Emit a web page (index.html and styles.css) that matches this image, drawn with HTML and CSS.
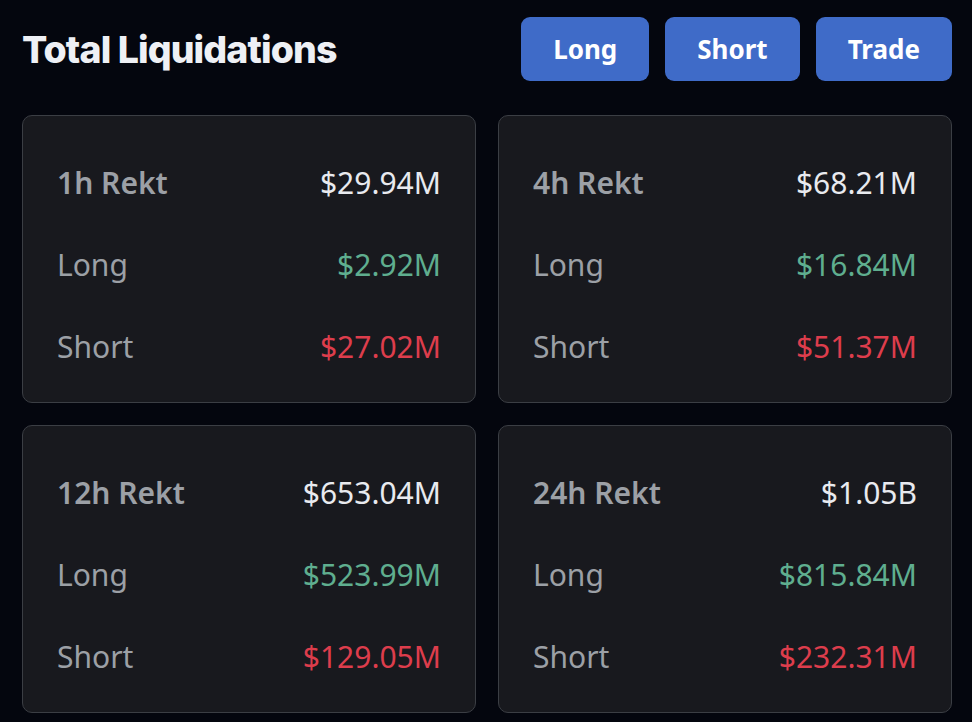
FILE: index.html
```html
<!DOCTYPE html>
<html>
<head>
    <title>Total Liquidations</title>
    <link rel="stylesheet" href="styles.css">
</head>
<body>
    <div class="header">
        <h1>Total Liquidations</h1>
        <div class="actions">
            <button class="btn">Long</button>
            <button class="btn">Short</button>
            <button class="btn">Trade</button>
        </div>
    </div>

    <div class="grid">
        <div class="card">
            <div class="row"><span class="label strong">1h Rekt</span><span class="value">$29.94M</span></div>
            <div class="row"><span class="label">Long</span><span class="value long">$2.92M</span></div>
            <div class="row"><span class="label">Short</span><span class="value short">$27.02M</span></div>
        </div>
        <div class="card">
            <div class="row"><span class="label strong">4h Rekt</span><span class="value">$68.21M</span></div>
            <div class="row"><span class="label">Long</span><span class="value long">$16.84M</span></div>
            <div class="row"><span class="label">Short</span><span class="value short">$51.37M</span></div>
        </div>
        <div class="card">
            <div class="row"><span class="label strong">12h Rekt</span><span class="value">$653.04M</span></div>
            <div class="row"><span class="label">Long</span><span class="value long">$523.99M</span></div>
            <div class="row"><span class="label">Short</span><span class="value short">$129.05M</span></div>
        </div>
        <div class="card">
            <div class="row"><span class="label strong">24h Rekt</span><span class="value">$1.05B</span></div>
            <div class="row"><span class="label">Long</span><span class="value long">$815.84M</span></div>
            <div class="row"><span class="label">Short</span><span class="value short">$232.31M</span></div>
        </div>
    </div>
</body>
</html>
```

FILE: styles.css
```css
body {
    margin: 0;
    padding: 17px 20px 0 22px;
    background: #04060e;
    color: #e8eaef;
    font-family: "Noto Sans", sans-serif;
}

.header {
    display: flex;
    justify-content: space-between;
    align-items: center;
    height: 64px;
}

.header h1 {
    margin: 0;
    font-family: Inter, sans-serif;
    font-size: 37.5px;
    font-weight: 800;
    letter-spacing: -0.9px;
    color: #eef0f5;
}

.actions {
    display: flex;
    gap: 16px;
}

.btn {
    height: 64px;
    padding: 0 32px;
    border: none;
    border-radius: 9px;
    background: #3f6bc8;
    color: #fff;
    font-family: "Noto Sans", sans-serif;
    font-size: 26px;
    font-weight: 700;
}

.grid {
    display: grid;
    grid-template-columns: 1fr 1fr;
    gap: 22px;
    margin-top: 34px;
}

.card {
    height: 288px;
    box-sizing: border-box;
    padding: 25px 34px 17px 34px;
    background: #18191e;
    border: 1.5px solid #3b3e44;
    border-radius: 10px;
}

.row {
    display: flex;
    justify-content: space-between;
    align-items: center;
    height: 82px;
    font-size: 30px;
}

.label {
    color: #9ca0a6;
}

.label.strong {
    font-weight: 600;
}

.value.long {
    color: #5fae8f;
}

.value.short {
    color: #dd3d4c;
}
```
